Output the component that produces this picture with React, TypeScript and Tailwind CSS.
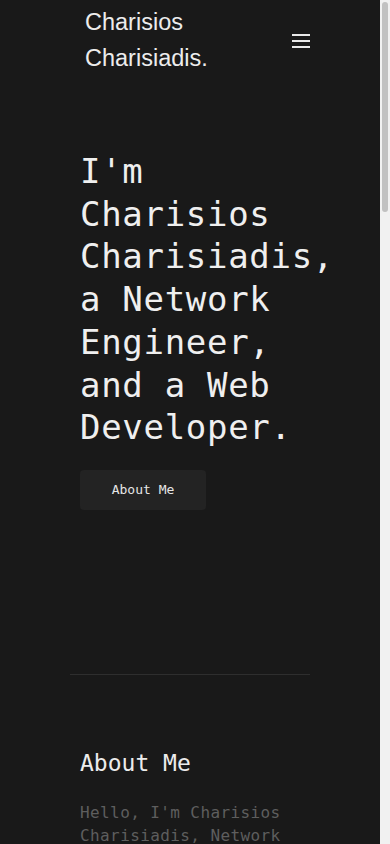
import React from "react";

export default function App() {
  const mono = { fontFamily: '"DejaVu Sans Mono", "Liberation Mono", monospace' };
  return (
    <div className="flex h-[844px] overflow-hidden bg-[#191919] text-[#ececec]">
      <div className="min-w-0 flex-1 overflow-hidden">
        <header className="flex items-center justify-between pl-[85px] pr-[70px] pt-[4px]">
          <div className="text-[23.5px] leading-[36px] text-[#ececec]" style={{ fontFamily: '"Liberation Sans", Arial, sans-serif' }}>
            Charisios
            <br />
            Charisiadis.
          </div>
          <button className="mt-[2px] flex h-[20px] w-[18px] flex-col justify-center gap-[4px]" aria-label="menu">
            <span className="block h-[2px] w-[18px] bg-[#e8e8e8]" />
            <span className="block h-[2px] w-[18px] bg-[#e8e8e8]" />
            <span className="block h-[2px] w-[18px] bg-[#e8e8e8]" />
          </button>
        </header>

        <section className="px-[80px] pt-[74px]" style={mono}>
          <h1 className="w-[240px] text-[34px] leading-[42.7px] tracking-[0.7px] text-[#efefef]">
            I'm Charisios Charisiadis, a Network Engineer, and a Web Developer.
          </h1>
          <button className="mt-[21px] h-[40px] w-[126px] rounded-[4px] bg-[#232323] text-[13px] text-[#e6e6e6]">
            About Me
          </button>
        </section>

        <div className="mx-auto mt-[164px] h-px w-[240px] bg-[#2e2e2e]" />

        <section className="px-[80px] pt-[72px]" style={mono}>
          <h2 className="text-[23px] leading-[32px] text-[#ececec]">About Me</h2>
          <p className="mt-[22px] w-[240px] text-[16px] leading-[23px] tracking-[0.4px] text-[#5e5e5e]">
            Hello, I'm Charisios Charisiadis, Network Engineer and Web Developer based in Greece. I enjoy designing
            reliable networks and building clean, fast websites.
          </p>
        </section>
      </div>
      <div className="flex w-[10px] shrink-0 justify-center bg-[#f1f1f1] pt-[2px]" aria-hidden="true">
        <div className="h-[210px] w-[6px] rounded-full bg-[#c1c1c1]" />
      </div>
    </div>
  );
}
